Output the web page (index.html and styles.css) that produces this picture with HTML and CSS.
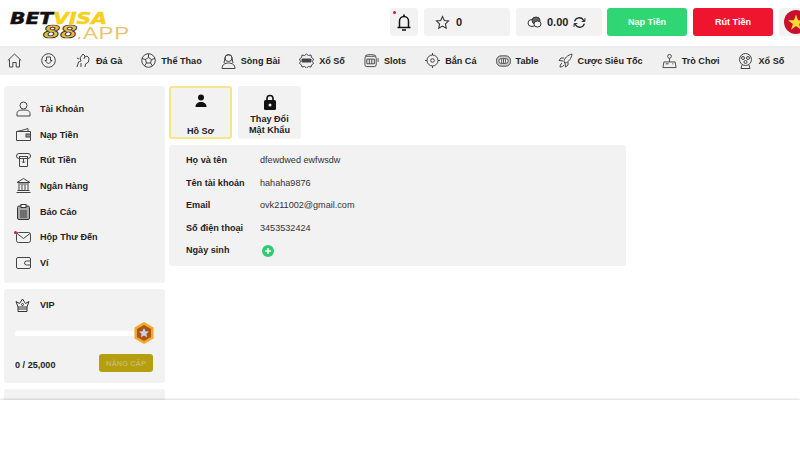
FILE: index.html
```html
<!DOCTYPE html>
<html lang="en">
<head>
    <meta charset="UTF-8">
    <meta name="viewport" content="width=device-width, initial-scale=1.0">
    <title>BetVisa88 - Hồ Sơ</title>
    <link rel="stylesheet" href="styles.css">
</head>
<body>

<header class="topbar">
    <div class="logo">
        <div class="logo-top"><span class="logo-bet">BET</span><span class="logo-visa">VISA</span></div>
        <div class="logo-bottom"><span class="logo-88">88</span><span class="logo-app">.APP</span></div>
    </div>
    <div class="top-actions">
        <div class="pill pill-bell">
            <span class="red-dot"></span>
            <svg width="14" height="17" viewBox="0 0 14 17" fill="none" stroke="#111" stroke-width="1.5"><path d="M2.500 13V7a4.500 4.500 0 0 1 9 0v6M.5 13.500h13"/><path d="M7 .5v2M5 16h4" stroke-width="1.700"/></svg>
        </div>
        <div class="pill pill-star">
            <svg width="15" height="15" viewBox="0 0 24 24" fill="none" stroke="#333" stroke-width="1.700"><path d="M12 2.500l2.900 6.300 6.800.8-5 4.700 1.300 6.800-6-3.400-6 3.400 1.300-6.800-5-4.700 6.800-.8z"/></svg>
            <span class="pill-num">0</span>
        </div>
        <div class="pill pill-coin">
            <svg width="15" height="12" viewBox="0 0 15 12" fill="#fff" stroke="#333" stroke-width="1"><ellipse cx="5" cy="7" rx="4" ry="3.500"/><ellipse cx="9" cy="4.500" rx="4" ry="3.500" fill="#666"/><ellipse cx="10.500" cy="8" rx="3.500" ry="3"/></svg>
            <span class="pill-num">0.00</span>
            <svg width="13" height="13" viewBox="0 0 24 24" fill="none" stroke="#222" stroke-width="2.400"><path d="M3 10a9 9 0 0 1 16-3l2 2.500M21 14a9 9 0 0 1-16 3l-2-2.500"/><path d="M22 4v6h-6M2 20v-6h6" stroke-width="1.800"/></svg>
        </div>
        <div class="btn btn-green">Nạp Tiền</div>
        <div class="btn btn-red">Rút Tiền</div>
        <div class="pill pill-flag">
            <svg width="24" height="24" viewBox="0 0 24 24"><circle cx="12" cy="12" r="12" fill="#c8102e"/><path d="M12 4.500l2 5.800h6l-4.900 3.600 1.900 5.800-5-3.600-5 3.600 1.900-5.800L4 10.300h6z" fill="#fdd835"/></svg>
        </div>
    </div>
</header>

<nav class="mainnav">
    <span class="nav-item">
        <svg width="15" height="15" viewBox="0 0 15 15" fill="none" stroke="#444"><path d="M.8 7.500L7.500 1l6.700 6.500M2.500 6.500V14h3.300V9.500h3.400V14h3.300V6.500"/></svg>
    </span>
    <span class="nav-item nav-down">
        <svg width="15" height="15" viewBox="0 0 15 15" fill="none" stroke="#444"><circle cx="7.500" cy="7.500" r="6.800"/><path d="M5.500 4h4v3.500H11l-3.500 3.500L4 7.500h1.500z"/></svg>
    </span>
    <span class="nav-item"><svg width="15" height="15" viewBox="0 0 15 15" fill="none" stroke="#444"><path d="M1 14l1.500-5L5 8 4 5l3-4 2 2-1 3M3 6L1 5M9 14l.5-3 3-2 .5-4-2-2-2 1M5 10v4"/></svg>Đá Gà</span>
    <span class="nav-item"><svg width="15" height="15" viewBox="0 0 15 15" fill="none" stroke="#444"><circle cx="7.500" cy="7.500" r="6.800"/><path d="M7.500 4.500l3 2-1 3.500h-4l-1-3.500zM7.500 4.500V1M10.500 6.500l3.500-1M9.500 10l2 3M5.500 10l-2 3M4.500 6.500L1 5.500"/></svg>Thể Thao</span>
    <span class="nav-item"><svg width="15" height="16" viewBox="0 0 15 16" fill="none" stroke="#444"><circle cx="7.500" cy="5" r="3.500"/><path d="M4 5C4 1 11 1 11 5l1 5M4 5L3 10M1 15.500c0-4 3-5.500 6.500-5.500s6.500 1.500 6.500 5.500z"/></svg>Sòng Bài</span>
    <span class="nav-item"><svg width="15" height="15" viewBox="0 0 15 15" fill="none" stroke="#444"><path d="M7.500 1l2 1.500 2.500-.5.500 2.500 2 1.500-1 2.500 1 2-2 1.500-.5 2-2.500-.5-2 1.500-2-1.500-2.500.5-.5-2-2-1.500 1-2-1-2.500 2-1.500L3 2l2.500.5z"/><path d="M3 6h9v3H3z" fill="#444"/></svg>Xổ Số</span>
    <span class="nav-item"><svg width="15" height="15" viewBox="0 0 16 15" fill="none" stroke="#444"><rect x="1" y="3" width="12" height="11" rx="2"/><path d="M1 3c2-2.500 10-2.500 12 0M3 6h8v5H3zM5.700 6v5M8.300 6v5M15 5v4"/></svg>Slots</span>
    <span class="nav-item"><svg width="15" height="15" viewBox="0 0 15 15" fill="none" stroke="#444"><circle cx="7.500" cy="7.500" r="5.500"/><circle cx="7.500" cy="7.500" r="1.800"/><path d="M7.500 0v2M7.500 13v2M0 7.500h2M13 7.500h2"/></svg>Bắn Cá</span>
    <span class="nav-item"><svg width="15" height="12" viewBox="0 0 16 12" fill="none" stroke="#444"><rect x=".5" y=".5" width="15" height="11" rx="5" fill="#ccc"/><rect x="3" y="3.500" width="10" height="5" rx="2.500" fill="#fff"/><path d="M6 4v4M8 4v4M10 4v4"/></svg>Table</span>
    <span class="nav-item"><svg width="15" height="15" viewBox="0 0 15 15" fill="none" stroke="#444"><path d="M6 9c0-4 4-7 8-8-.5 4-3 8-7 9zM6 5H3L1 7.500l4 .5M10 9v3l-2.500 2-.5-4M4 10c-1.500 1-2 3-2 4 1.500 0 3-.5 4-2"/></svg>Cược Siêu Tốc</span>
    <span class="nav-item"><svg width="15" height="16" viewBox="0 0 16 16" fill="none" stroke="#444"><circle cx="8" cy="3" r="2"/><path d="M8 5v4M1 15l1-6h12l1 6zM4 11h3M11 11h1"/></svg>Trò Chơi</span>
    <span class="nav-item"><svg width="15" height="16" viewBox="0 0 15 16" fill="none" stroke="#444"><circle cx="7.500" cy="6.500" r="6"/><circle cx="5" cy="5" r="1.500"/><circle cx="10" cy="5" r="1.500"/><circle cx="7.500" cy="9" r="1.500"/><path d="M4 12l-1 3.500h9L11 12"/></svg>Xổ Số</span>
</nav>

<main class="content">
    <aside class="sidebar">
        <div class="card menu-card">
            <div class="menu-row">
                <svg width="15" height="16" viewBox="0 0 15 16" fill="none" stroke="#444"><circle cx="7.500" cy="4.500" r="3.500"/><path d="M1 15v-2.500C1 10 3 9 7.500 9s6.500 1 6.500 3.500V15z"/></svg>
                <span>Tài Khoản</span>
            </div>
            <div class="menu-row">
                <svg width="15" height="13" viewBox="0 0 15 13" fill="none" stroke="#444"><path d="M.5 3.500C3 3 8 2 12 .5v3M.5 3.500h14v9H.5z"/><rect x="10" y="6" width="4.500" height="3" fill="#999"/></svg>
                <span>Nạp Tiền</span>
            </div>
            <div class="menu-row">
                <svg width="15" height="14" viewBox="0 0 15 14" fill="none" stroke="#444"><rect x=".5" y=".5" width="14" height="5" rx="2.500"/><path d="M3 3.500h9M3.500 3.500v10h8v-10M7.500 6v4M6 8.500l1.500 1.500L9 8.500"/></svg>
                <span>Rút Tiền</span>
            </div>
            <div class="menu-row">
                <svg width="15" height="15" viewBox="0 0 15 15" fill="none" stroke="#444"><path d="M7.500 .5L14 4.500H1zM2 6h11M3 7v5M6 7v5M9 7v5M12 7v5M1.500 12.500h12M.5 14.500h14"/></svg>
                <span>Ngân Hàng</span>
            </div>
            <div class="menu-row">
                <svg width="13" height="16" viewBox="0 0 13 16" fill="#aaa" stroke="#333"><rect x=".5" y="2" width="12" height="13.500" rx="1.500"/><rect x="4" y=".5" width="5" height="3" fill="#fff"/><path d="M3 7h7M3 9h7M3 11h7M3 13h7" stroke="#333"/></svg>
                <span>Báo Cáo</span>
            </div>
            <div class="menu-row">
                <span class="red-dot menu-dot"></span>
                <svg width="15" height="11" viewBox="0 0 15 11" fill="none" stroke="#444"><rect x=".5" y=".5" width="14" height="10" rx="2"/><path d="M1 1.500l6.500 5 6.500-5"/></svg>
                <span>Hộp Thư Đến</span>
            </div>
            <div class="menu-row">
                <svg width="15" height="12" viewBox="0 0 15 12" fill="none" stroke="#444"><rect x=".5" y=".5" width="14" height="11" rx="1.500"/><path d="M14.500 4H10.500a2 2 0 0 0 0 4h4"/></svg>
                <span>Ví</span>
            </div>
        </div>

        <div class="card vip-card">
            <div class="vip-head">
                <svg width="15" height="14" viewBox="0 0 15 14" fill="none" stroke="#333"><path d="M3 9L1 3.500l3.500 2L7.500 1l3 4.500 3.500-2L12 9zM3 9v4.500h9V9M3 11h9"/><circle cx="7.500" cy="6.500" r="1"/></svg>
                <span>VIP</span>
            </div>
            <div class="vip-progress">
                <div class="vip-track"></div>
                <svg class="vip-badge" width="20" height="22" viewBox="0 0 20 22"><path d="M10 0l9.500 5.500v11L10 22 .5 16.500v-11z" fill="#f5a623"/><path d="M10 3l7 4v8l-7 4-7-4V7z" fill="#a8551a"/><path d="M10 6l1.500 3.200 3.500.4-2.600 2.300.7 3.400L10 13.600l-3.100 1.700.7-3.400L5 9.600l3.500-.4z" fill="#ccd0e0"/></svg>
            </div>
            <div class="vip-foot">
                <span class="vip-score">0 / 25,000</span>
                <span class="vip-upgrade">NÂNG CẤP</span>
            </div>
        </div>

        <div class="card last-card"></div>
    </aside>

    <section class="profile">
        <div class="tabs">
            <div class="tab tab-active">
                <svg width="14" height="14" viewBox="0 0 14 14" fill="#111"><circle cx="7" cy="3.500" r="3"/><path d="M1.500 13c0-3.500 2.500-5 5.500-5s5.500 1.500 5.500 5z"/></svg>
                <span>Hồ Sơ</span>
            </div>
            <div class="tab">
                <svg width="12" height="16" viewBox="0 0 12 16" fill="#111"><path d="M3 7V4.500a3 3 0 0 1 6 0V7" fill="none" stroke="#111" stroke-width="1.600"/><rect y="6" width="12" height="10" rx="1.500"/><circle cx="6" cy="11" r="1.500" fill="#f1f1f1"/></svg>
                <span>Thay Đổi<br>Mật Khẩu</span>
            </div>
        </div>
        <div class="info-card">
            <div class="info-row"><span class="info-label">Họ và tên</span><span class="info-val">dfewdwed ewfwsdw</span></div>
            <div class="info-row"><span class="info-label">Tên tài khoản</span><span class="info-val">hahaha9876</span></div>
            <div class="info-row"><span class="info-label">Email</span><span class="info-val">ovk211002@gmail.com</span></div>
            <div class="info-row"><span class="info-label">Số điện thoại</span><span class="info-val">3453532424</span></div>
            <div class="info-row">
                <span class="info-label">Ngày sinh</span>
                <svg class="add-icon" width="12" height="12" viewBox="0 0 12 12"><circle cx="6" cy="6" r="6" fill="#2ecc71"/><path d="M6 3v6M3 6h6" stroke="#fff" stroke-width="1.600"/></svg>
            </div>
        </div>
    </section>
</main>

<div class="bottom-cover"></div>

</body>
</html>
```

FILE: styles.css
```css
* {
    margin: 0;
    padding: 0;
    box-sizing: border-box;
}

html, body {
    height: 100%;
    overflow: hidden;
    background: #fff;
    font-family: 'Liberation Sans', Arial, sans-serif;
    color: #222;
}

.topbar {
    height: 46px;
    display: flex;
    justify-content: space-between;
    padding: 8px 0 0 10px;
}

.logo {
    width: 120px;
    font-family: 'DejaVu Sans', sans-serif;
    font-weight: 700;
    font-style: italic;
    line-height: 1;
}

.logo-top {
    font-size: 16px;
    margin-top: 3px;
    white-space: nowrap;
    transform: scaleX(1.27);
    transform-origin: left;
    -webkit-text-stroke: 0.5px currentColor;
}

.logo-bet {
    color: #111;
}

.logo-visa {
    color: #f5d020;
}

.logo-bottom {
    display: flex;
    align-items: flex-end;
    margin: -3px 0 0 33px;
    white-space: nowrap;
}

.logo-88 {
    width: 33px;
    font-size: 17px;
    color: #e8bb4a;
    -webkit-text-stroke: 0.7px #222;
    transform: scaleX(1.45);
    transform-origin: left;
}

.logo-app {
    font-family: 'Liberation Sans', sans-serif;
    font-size: 16px;
    font-style: normal;
    font-weight: 400;
    color: #e9c56f;
    line-height: 14px;
    transform: scaleX(1.4);
    transform-origin: left;
    letter-spacing: 0.5px;
}

.top-actions {
    display: flex;
    gap: 6px;
    margin-right: -11px;
    height: 28px;
}

.pill {
    background: #f2f2f2;
    border-radius: 3px;
    display: flex;
    align-items: center;
    font-weight: 700;
    font-size: 11px;
    position: relative;
}

.pill-bell {
    width: 28px;
    justify-content: center;
}

.pill-star {
    width: 86px;
    padding-left: 11px;
    gap: 6px;
}

.pill-coin {
    width: 86px;
    padding-left: 11px;
    gap: 5px;
    margin-right: -1px;
}

.pill-num {
    color: #222;
}

.pill-flag {
    width: 32px;
    padding-left: 5px;
    overflow: hidden;
}

.pill-flag svg {
    flex: none;
}

.red-dot {
    position: absolute;
    top: 3px;
    left: 3px;
    width: 3px;
    height: 3px;
    border-radius: 50%;
    background: #e0103a;
}

.btn {
    width: 80px;
    border-radius: 3px;
    color: #fff;
    font-weight: 700;
    font-size: 9.100px;
    display: flex;
    align-items: center;
    justify-content: center;
}

.btn-green {
    background: #2fd673;
    color: #f2fff7;
}

.btn-red {
    background: #f0152f;
}

.mainnav {
    height: 29px;
    background: #f0f0f0;
    display: flex;
    align-items: center;
    gap: 19px;
    padding-left: 7px;
    font-size: 9.100px;
    font-weight: 700;
    color: #222;
    white-space: nowrap;
}

.nav-item {
    display: flex;
    align-items: center;
    gap: 5px;
}

.nav-down {
    margin-right: 1px;
}

.content {
    display: flex;
    gap: 4px;
    padding: 11px 0 0 4px;
}

.sidebar {
    width: 161px;
    display: flex;
    flex-direction: column;
    gap: 6px;
}

.card {
    background: #f2f2f2;
    border-radius: 3px;
}

.menu-card {
    height: 197px;
    padding: 10px 0 0 12px;
}

.menu-row {
    height: 25.700px;
    display: flex;
    align-items: center;
    gap: 9px;
    font-size: 9.100px;
    font-weight: 700;
    color: #222;
    position: relative;
}

.menu-row svg {
    flex: none;
    width: 15px;
}

.menu-dot {
    top: 7px;
    left: -2px;
}

.vip-card {
    height: 94px;
    padding: 9px 11px 0 11px;
}

.vip-head {
    display: flex;
    align-items: center;
    gap: 10px;
    font-size: 9.100px;
    font-weight: 700;
    color: #222;
}

.vip-progress {
    display: flex;
    align-items: center;
    margin-top: 10px;
}

.vip-track {
    flex: 1;
    height: 5px;
    background: #fff;
    border-radius: 3px;
    margin-right: -1px;
}

.vip-foot {
    display: flex;
    justify-content: space-between;
    margin-top: 10px;
    font-size: 9.100px;
    font-weight: 700;
    color: #222;
}

.vip-score {
    margin-top: 6px;
}

.vip-upgrade {
    background: #b59e10;
    color: #c8b95c;
    border-radius: 3px;
    width: 54px;
    height: 18px;
    font-size: 7.500px;
    margin-right: 1px;
    display: flex;
    align-items: center;
    justify-content: center;
}

.last-card {
    height: 60px;
}

.profile {
    width: 457px;
}

.tabs {
    display: flex;
    gap: 6px;
}

.tab {
    width: 63px;
    height: 53px;
    background: #f2f2f2;
    border-radius: 3px;
    display: flex;
    flex-direction: column;
    align-items: center;
    justify-content: space-between;
    padding: 8px 0 3px;
    font-size: 9.100px;
    font-weight: 700;
    line-height: 11px;
    text-align: center;
    color: #222;
}

.tab-active {
    border: 2px solid #f6e58d;
    padding: 6px 0 0;
}

.info-card {
    margin-top: 6px;
    height: 121px;
    background: #f2f2f2;
    border-radius: 3px;
    padding: 4px 0 0 17px;
}

.info-row {
    height: 22.500px;
    display: flex;
    align-items: center;
    font-size: 9.100px;
}

.info-label {
    width: 74px;
    font-weight: 700;
    color: #222;
}

.info-val {
    color: #333;
}

.add-icon {
    margin: 2px 0 0 2px;
}

.bottom-cover {
    position: fixed;
    left: 0;
    right: 0;
    top: 400px;
    bottom: 0;
    background: #fff;
    box-shadow: 0 -1px 2px rgba(0, 0, 0, 0.15);
}
```
